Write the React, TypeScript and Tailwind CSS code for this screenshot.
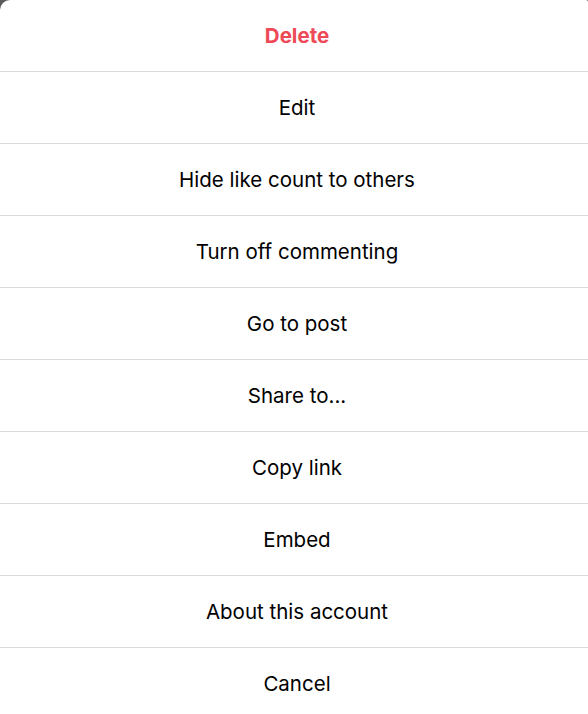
import React from "react";

const items = [
  "Edit",
  "Hide like count to others",
  "Turn off commenting",
  "Go to post",
  "Share to...",
  "Copy link",
  "Embed",
  "About this account",
  "Cancel",
];

export default function App() {
  return (
    <div className="w-[588px] h-[714px] overflow-hidden bg-[#5a5a5a]" style={{ fontFamily: "Inter, 'Noto Sans', sans-serif" }}>
      <div className="bg-white rounded-tl-[10px] rounded-tr-[2px] rounded-bl-[2px] flex flex-col">
        <button className="h-[71px] pl-[6px] pt-[1px] flex items-center justify-center text-[20.5px] font-bold text-[#ed4956]">
          Delete
        </button>
        {items.map((t) => (
          <button
            key={t}
            className="h-[72px] pl-[6px] pt-[2px] shrink-0 border-t border-[#dbdbdb] flex items-center justify-center text-[20.5px] text-black"
          >
            {t}
          </button>
        ))}
      </div>
    </div>
  );
}
